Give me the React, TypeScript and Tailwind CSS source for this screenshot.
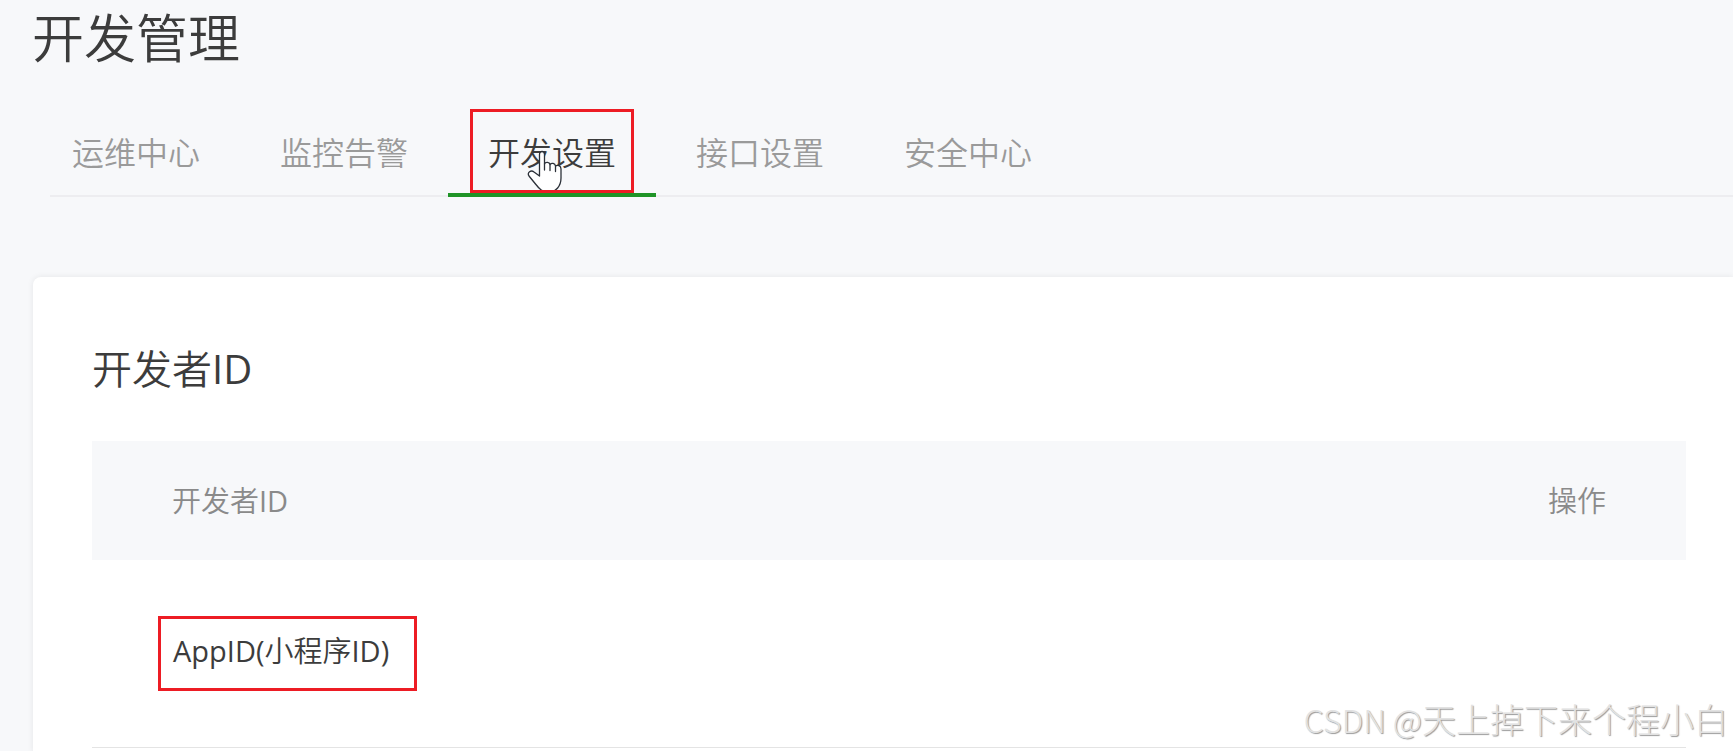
import { useState } from 'react';

const tabs = ['运维中心', '监控告警', '开发设置', '接口设置', '安全中心'];

function HandCursor() {
  return (
    <svg
      className="pointer-events-none absolute top-[41px] left-[79px] h-10 w-9"
      viewBox="0 0 36 40"
      fill="#fff"
      stroke="#2b3038"
      strokeWidth="1.3"
      strokeLinejoin="round"
      strokeLinecap="round"
      aria-hidden="true"
    >
      <path d="M12.500 26V4.500C12.500 .5 17.500 .5 17.500 4.500V14C18.500 11.500 22.500 12 23 14.500C24.500 12.500 28 13 28.500 16C30.500 14.500 34 15.500 34 19V28C34 36 29 42 22 42C15 42 12 38.500 8.500 34L2 26C-.2 22.500 4 19.500 7 22Z" />
      <path d="M17.500 14V20M23 15V20.500M28.500 16V21.500" fill="none" />
    </svg>
  );
}

export default function App() {
  const [active, setActive] = useState('开发设置');

  return (
    <div className="relative overflow-hidden bg-[#f7f8fa] font-['Open_Sans','Noto_Sans_CJK_SC_DemiLight','Noto_Sans_CJK_SC',sans-serif] text-[#3c3c3c]">
      <header className="pl-8">
        <h1 className="pt-1.5 text-[52px] leading-[64px]">开发管理</h1>
        <nav className="mt-[39px] flex">
          {tabs.map((tab) => (
            <button
              key={tab}
              type="button"
              onClick={() => setActive(tab)}
              className={`relative h-[88px] shrink-0 border-b-4 px-10 pt-1 text-[32px] leading-[80px] ${
                active === tab ? 'border-[#1f9427] text-[#3c3c3c]' : 'border-transparent text-[#9a9a9a]'
              }`}
            >
              {tab}
              {tab === '开发设置' && (
                <>
                  <HandCursor />
                  <span className="pointer-events-none absolute top-0 left-[22px] h-[84px] w-[164px] border-3 border-[#ed1c24]" />
                </>
              )}
            </button>
          ))}
        </nav>
        <div className="-mt-0.5 ml-[18px] h-0.5 bg-[#ededf0]" />
      </header>

      <main className="mt-20 ml-[33px] rounded-tl-lg bg-white pr-[47px] pb-1 pl-[59px] shadow-[0_0_6px_rgba(0,0,0,0.08)]">
        <h2 className="pt-[60px] text-[40px] leading-[64px]">开发者ID</h2>
        <table className="mt-10 w-full text-[29px]">
          <thead className="bg-[#f7f8fa] text-[#8a8a8a]">
            <tr className="h-[119px]">
              <th className="px-20 text-left font-normal">开发者ID</th>
              <th className="px-20 text-right font-normal">操作</th>
            </tr>
          </thead>
          <tbody>
            <tr className="h-[187px] border-b border-[#e4e4e4]">
              <td className="pl-[66px]">
                <span className="inline-block h-[75px] w-[259px] border-3 border-[#ed1c24] pl-3 leading-[64px]">
                  AppID(小程序ID)
                </span>
              </td>
              <td />
            </tr>
          </tbody>
        </table>
      </main>

      <p className="absolute right-[5px] bottom-2 font-['Noto_Sans_CJK_SC',sans-serif] text-[34px] leading-[50px] font-light text-[#e2e2e2] [text-shadow:1px_1px_1px_#999]">
        <span className="text-[32px]">CSDN @</span>天上掉下来个程小白
      </p>
    </div>
  );
}
